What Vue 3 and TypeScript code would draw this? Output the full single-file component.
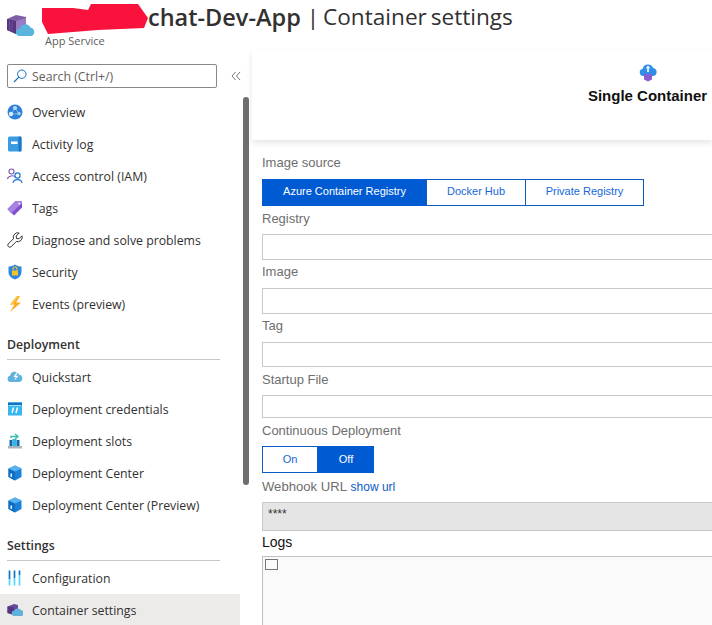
<script setup lang="ts">
interface NavItem { label: string; icon: string; active?: boolean }
interface NavGroup { title?: string; items: NavItem[] }

const groups: NavGroup[] = [
  { items: [
    { label: 'Overview', icon: 'overview' },
    { label: 'Activity log', icon: 'log' },
    { label: 'Access control (IAM)', icon: 'iam' },
    { label: 'Tags', icon: 'tag' },
    { label: 'Diagnose and solve problems', icon: 'wrench' },
    { label: 'Security', icon: 'shield' },
    { label: 'Events (preview)', icon: 'bolt' },
  ] },
  { title: 'Deployment', items: [
    { label: 'Quickstart', icon: 'quick' },
    { label: 'Deployment credentials', icon: 'cred' },
    { label: 'Deployment slots', icon: 'slots' },
    { label: 'Deployment Center', icon: 'cube' },
    { label: 'Deployment Center (Preview)', icon: 'cube' },
  ] },
  { title: 'Settings', items: [
    { label: 'Configuration', icon: 'config' },
    { label: 'Container settings', icon: 'container', active: true },
  ] },
]
const sources = ['Azure Container Registry', 'Docker Hub', 'Private Registry']
const fields = [
  { name: 'Registry', cls: 'f-reg' },
  { name: 'Image', cls: 'f-img' },
  { name: 'Tag', cls: 'f-tag' },
  { name: 'Startup File', cls: 'f-start' },
]
</script>

<template>
  <div class="page">
    <header class="top">
      <svg class="app-icon" width="28" height="24" viewBox="0 0 28 24">
        <path d="M0 5 L9 1 L19 3 V17 L9 20 L0 16 Z" fill="#7f5fa8" />
        <path d="M0 5 L9 7 V20 L0 16 Z" fill="#58367f" />
        <path d="M2.5 7 V16 M5 7.5 V17" stroke="#7a5aa5" stroke-width=".8" />
        <path d="M9 7 L19 4 V13 L9 19 Z" fill="#9b7cc4" />
        <path d="M13 22 a3.6 3.6 0 0 1 -.6 -7.2 a6 6 0 0 1 11 -1.4 a4.4 4.4 0 0 1 .6 8.6 Z" fill="#58b4dc" />
      </svg>
      <div class="titles">
        <h1 class="title">
          <svg class="blot" width="106" height="30" viewBox="0 0 106 30">
            <path d="M0 4 L31 4 L46 6 L49 0 L96 0 L106 14 L102 24 L56 26 L6 30 L0 18 Z" fill="#f8123c" />
          </svg>
          <span class="app-name">chat-Dev-App</span>
          <span class="page-name">| Container settings</span>
        </h1>
        <div class="subtitle">App Service</div>
      </div>
    </header>

    <div class="body">
      <aside class="side">
        <div class="search-row">
          <div class="search">
            <svg width="14" height="14" viewBox="0 0 14 14">
              <circle cx="8.8" cy="5.2" r="4.2" fill="none" stroke="#0f6cbd" stroke-width="1" />
              <path d="M5.8 8.2 L1 13" stroke="#0f6cbd" stroke-width="1.1" />
            </svg>
            <span>Search (Ctrl+/)</span>
          </div>
          <svg class="collapse" width="10" height="10" viewBox="0 0 10 10">
            <path d="M4.5 1 L1 5 L4.5 9 M9 1 L5.5 5 L9 9" fill="none" stroke="#777" stroke-width="1" />
          </svg>
        </div>

        <nav class="nav">
          <section v-for="(g, gi) in groups" :key="gi" class="group">
            <template v-if="g.title">
              <div class="group-title">{{ g.title }}</div>
              <div class="rule"></div>
            </template>
            <div v-for="item in g.items" :key="item.label" class="row" :class="{ active: item.active }">
              <svg class="ico" width="16" height="16" viewBox="0 0 16 16">
                <template v-if="item.icon === 'overview'">
                  <circle cx="8" cy="8" r="7.5" fill="#2f80d8" />
                  <path d="M8 4 L4 10 L12 10 Z" fill="none" stroke="#8cc4f0" stroke-width=".8" />
                  <circle cx="8" cy="4" r="2.1" fill="#b4d9f7" />
                  <circle cx="4" cy="10" r="2.2" fill="#d8ecfb" />
                  <circle cx="12" cy="9.5" r="1.7" fill="#a9d3f5" />
                </template>
                <template v-else-if="item.icon === 'log'">
                  <rect x="1" y="0.5" width="13.5" height="15" rx="1.5" fill="#3a9be2" />
                  <rect x="11.5" y="0.5" width="3" height="15" rx="1" fill="#1c78c8" />
                  <rect x="4" y="5.5" width="6.5" height="2.5" fill="#fff" />
                </template>
                <template v-else-if="item.icon === 'iam'">
                  <circle cx="4.5" cy="3.5" r="2.5" fill="none" stroke="#7a56b8" stroke-width="1.1" />
                  <path d="M.5 11 C1 7.5 7 7 8 9" fill="none" stroke="#7a56b8" stroke-width="1.1" />
                  <circle cx="10.5" cy="7.5" r="2.6" fill="none" stroke="#1f78d1" stroke-width="1.2" />
                  <path d="M6 15 C6.5 10.5 14.5 10.5 15 15" fill="none" stroke="#1f78d1" stroke-width="1.2" />
                </template>
                <template v-else-if="item.icon === 'tag'">
                  <path d="M8.5 1 L15 1 L15 7.5 L7 15.5 L0.5 9 Z" fill="#8050cc" />
                  <path d="M8.5 1 L15 1 L15 3 L4 13.5 L0.5 9 Z" fill="#a583e2" />
                  <circle cx="12.3" cy="3.7" r="1.1" fill="#efe8fb" />
                </template>
                <template v-else-if="item.icon === 'wrench'">
                  <path d="M15 3.8 L12 6.8 L9.5 6.5 L9.2 4 L12.2 1 A4.5 4.5 0 0 0 6.5 6.7 L1.2 12 A2 2 0 0 0 4 14.8 L9.3 9.5 A4.5 4.5 0 0 0 15 3.8 Z" fill="#fff" stroke="#333" stroke-width="1" stroke-linejoin="round" />
                </template>
                <template v-else-if="item.icon === 'shield'">
                  <path d="M8 0.5 C10 2 12.5 2.5 14.5 2.5 V8 C14.5 12 11 14.5 8 15.5 C5 14.5 1.5 12 1.5 8 V2.5 C3.5 2.5 6 2 8 0.5 Z" fill="#2f86e0" />
                  <rect x="5" y="6.5" width="6" height="5" rx=".5" fill="#f6c324" />
                  <path d="M6 6.5 V5 a2 2 0 0 1 4 0 V6.5" fill="none" stroke="#f6c324" stroke-width="1.1" />
                </template>
                <template v-else-if="item.icon === 'bolt'">
                  <path d="M10 0 L3 8.5 H7.5 L3 16 L14 6.5 H9 L13 0 Z" fill="#fba919" />
                  <path d="M10 0 L3 8.5 H6 L11.5 0 Z" fill="#fcc64e" />
                </template>
                <template v-else-if="item.icon === 'quick'">
                  <path d="M3.5 13 a3.3 3.3 0 0 1 -.3 -6.5 a4.6 4.6 0 0 1 8.8 -.8 a3.7 3.7 0 0 1 .3 7.3 Z" fill="#5fb2dc" />
                  <path d="M10 2.5 L6.5 8 H8.8 L7 12 L11.5 6.8 H9 L11 2.5 Z" fill="#fff" />
                </template>
                <template v-else-if="item.icon === 'cred'">
                  <rect x="1" y="1.5" width="14" height="13" fill="#38b6f0" />
                  <rect x="1" y="1.5" width="14" height="2.5" fill="#1173c5" />
                  <rect x="2" y="4" width="12" height="1" fill="#fff" opacity=".6" />
                  <path d="M6.5 6.5 L5 12 M10.5 6.5 L9 12" stroke="#fff" stroke-width="1.5" />
                </template>
                <template v-else-if="item.icon === 'slots'">
                  <path d="M1 13 H15 V15.5 H1 Z" fill="#a9b4bc" />
                  <path d="M2.5 7 H5.5 V13 H2.5 Z M9.5 7 H12.5 V13 H9.5 Z" fill="#1669a8" />
                  <path d="M5.5 6 H9.5 V13 H5.5 Z" fill="#35b4e8" />
                  <path d="M4 5 V3.5 H10 M8 1 L11 3.5 L8 6" fill="none" stroke="#37c2a8" stroke-width="1.4" />
                </template>
                <template v-else-if="item.icon === 'cube'">
                  <path d="M8 0.5 L14.5 3.5 V12 L8 15.5 L1.5 12 V3.5 Z" fill="#1b82d9" />
                  <path d="M1.5 3.5 L8 6.5 V15.5 L1.5 12 Z" fill="#0f6cbd" />
                  <path d="M8 0.5 L14.5 3.5 L8 6.5 L1.5 3.5 Z" fill="#59b4f0" />
                  <rect x="3.4" y="8.5" width="1.7" height="3.4" fill="#d8edfb" />
                </template>
                <template v-else-if="item.icon === 'config'">
                  <path d="M2.5 .5 V9 M7.5 .5 V8 M12.5 .5 V5" stroke="#1173c5" stroke-width="1.7" />
                  <path d="M2.5 9 V15.5 M7.5 8 V15.5 M12.5 5 V15.5" stroke="#50d8ff" stroke-width="1.7" />
                </template>
                <template v-else-if="item.icon === 'container'">
                  <path d="M0.5 4.5 L7 2 L11 3 V11 L7 13 L0.5 11 Z" fill="#6a4a9c" />
                  <path d="M0.5 4.5 L7 5.5 V13 L0.5 11 Z" fill="#523480" />
                  <path d="M7.5 14 a2.7 2.7 0 0 1 -.3 -5.4 a4 4 0 0 1 7 -.3 a2.9 2.9 0 0 1 .3 5.7 Z" fill="#5fb2dc" />
                </template>
              </svg>
              <span class="label">{{ item.label }}</span>
            </div>
          </section>
        </nav>
        <div class="scrollbar"></div>
      </aside>

      <main class="main">
        <div class="tabs">
          <div class="tab">
            <svg width="18" height="20" viewBox="0 0 18 20">
              <path d="M4 13 a3.7 3.7 0 0 1 -.3 -7.3 a5.4 5.4 0 0 1 10.4 -.6 a4 4 0 0 1 .2 7.9 Z" fill="#2f8fe6" />
              <path d="M5 10 L9 12 L13 10 V16.5 L9 18.5 L5 16.5 Z" fill="#8a5cd0" />
              <path d="M9 2.5 L11.3 5.2 H9.8 V9 H8.2 V5.2 H6.7 Z" fill="#fff" />
            </svg>
            <div class="tab-name">Single Container</div>
          </div>
        </div>

        <form class="form" @submit.prevent>
          <div class="lbl first">Image source</div>
          <div class="seg source">
            <button v-for="(s, i) in sources" :key="s" type="button" class="seg-btn" :class="['s' + i, { on: i === 0 }]">{{ s }}</button>
          </div>
          <template v-for="f in fields" :key="f.name">
            <div class="lbl field-lbl" :class="f.cls + '-lbl'">{{ f.name }}</div>
            <div class="input" :class="f.cls"></div>
          </template>
          <div class="lbl cd">Continuous Deployment</div>
          <div class="seg toggle">
            <button type="button" class="seg-btn half">On</button>
            <button type="button" class="seg-btn half on">Off</button>
          </div>
          <div class="lbl hook"><span class="hook-text">Webhook URL</span> <a class="link">show url</a></div>
          <div class="masked">****</div>
          <div class="logs-title">Logs</div>
          <div class="logs"><span class="box"></span></div>
        </form>
      </main>
    </div>
  </div>
</template>

<style>
html, body { margin: 0; overflow: hidden; background: #fff; }
</style>

<style scoped>
.page { width: 712px; height: 625px; overflow: hidden; font-family: "Open Sans", sans-serif; color: #323130; position: relative; }
.top { height: 50px; display: flex; box-sizing: border-box; padding: 13px 0 0 7px; }
.app-icon { flex: none; margin-top: 1px; }
.titles { margin-left: 7px; margin-top: -13px; }
.title { margin: 0; display: flex; align-items: center; font-weight: 400; font-size: 22.6px; line-height: 34px; color: #323130; white-space: nowrap; }
.blot { flex: none; margin-top: 4px; }
.app-name { font-weight: 600; font-size: 23.5px; margin-right: 6px; }
.page-name { word-spacing: -2px; }
.subtitle { font-size: 11px; line-height: 14px; color: #605e5c; margin-left: 3px; margin-top: 0; }

.body { display: flex; height: 575px; }
.side { width: 252px; flex: none; position: relative; }
.search-row { display: flex; align-items: center; padding: 14px 0 0 7px; }
.search { width: 210px; height: 24px; box-sizing: border-box; border: 1px solid #8a8886; border-radius: 2px; display: flex; align-items: center; padding-left: 5px; gap: 5px; font-size: 12.3px; color: #605e5c; }
.collapse { margin-left: 14px; }
.nav { width: 240px; margin-top: 8px; }
.group { padding-bottom: 8px; }
.group-title { margin-left: 7px; font-size: 12.3px; line-height: 16px; font-weight: 600; padding-top: 9px; }
.rule { width: 213px; margin: 6px 0 1px 7px; height: 1px; background: #c8c6c4; }
.row { height: 32px; display: flex; align-items: center; padding-left: 7px; gap: 9px; font-size: 12.3px; }
.row.active { background: #edebe9; }
.ico { flex: none; }
.scrollbar { position: absolute; left: 243px; top: 47px; width: 6px; height: 388px; border-radius: 3px; background: #6e6e6e; }

.main { flex: 1; min-width: 0; font-family: "Liberation Sans", sans-serif; }
.tabs { height: 90px; box-shadow: 0 3px 6px rgba(0,0,0,.1); display: flex; justify-content: flex-end; padding-right: 5px; position: relative; background: #fff; box-sizing: border-box; }
.tab { width: 119px; margin-top: 13px; display: flex; flex-direction: column; align-items: center; }
.tab-name { font-size: 15px; font-weight: 700; color: #111; line-height: 16px; margin-top: 5px; white-space: nowrap; }

.form { padding-left: 10px; width: 500px; }
.lbl { font-size: 13px; line-height: 16px; color: #6e6e6e; }
.first { margin-top: 15px; }
.seg { display: flex; margin-top: 8px; height: 27px; width: 382px; }
.seg-btn { box-sizing: border-box; height: 27px; border: 1px solid #0b5cc4; background: #fff; color: #1667d9; font: 400 11px "Liberation Sans", sans-serif; padding: 0 0 1px; margin: 0; }
.source .seg-btn { padding-bottom: 3px; }
.seg-btn + .seg-btn { margin-left: -1px; }
.seg-btn.on { background: #005bd3; color: #fff; border-color: #005bd3; }
.s0 { width: 165px; }
.s1 { width: 100px; }
.s2 { width: 119px; }
.toggle { width: 112px; margin-top: 7px; }
.half { width: 56px; }
.half + .half { margin-left: 0; }
.field-lbl { margin-top: 4px; }
.f-reg-lbl, .f-start-lbl { margin-top: 5px; }
.input { height: 26px; box-sizing: border-box; border: 1px solid #c8c8c8; margin-top: 8px; }
.f-reg, .f-start { margin-top: 7px; }
.f-tag { height: 25px; }
.f-start { height: 23px; }
.cd { margin-top: 5px; }
.hook { margin-top: 6px; }
.hook-text { font-size: 13.1px; }
.link { color: #0b5cc4; font-size: 12px; }
.masked { margin-top: 7px; height: 29px; box-sizing: border-box; background: #e5e5e5; border: 1px solid #c8c8c8; font-size: 12px; line-height: 14px; padding: 4px 5px; color: #333; }
.logs-title { font-size: 14px; line-height: 18px; color: #111; margin-top: 2px; }
.logs { margin-top: 5px; height: 80px; box-sizing: border-box; background: #fafafa; border: 1px solid #c0c0c0; padding: 2px 2px; }
.box { display: block; width: 11px; height: 9px; border: 1px solid #777; }
</style>
